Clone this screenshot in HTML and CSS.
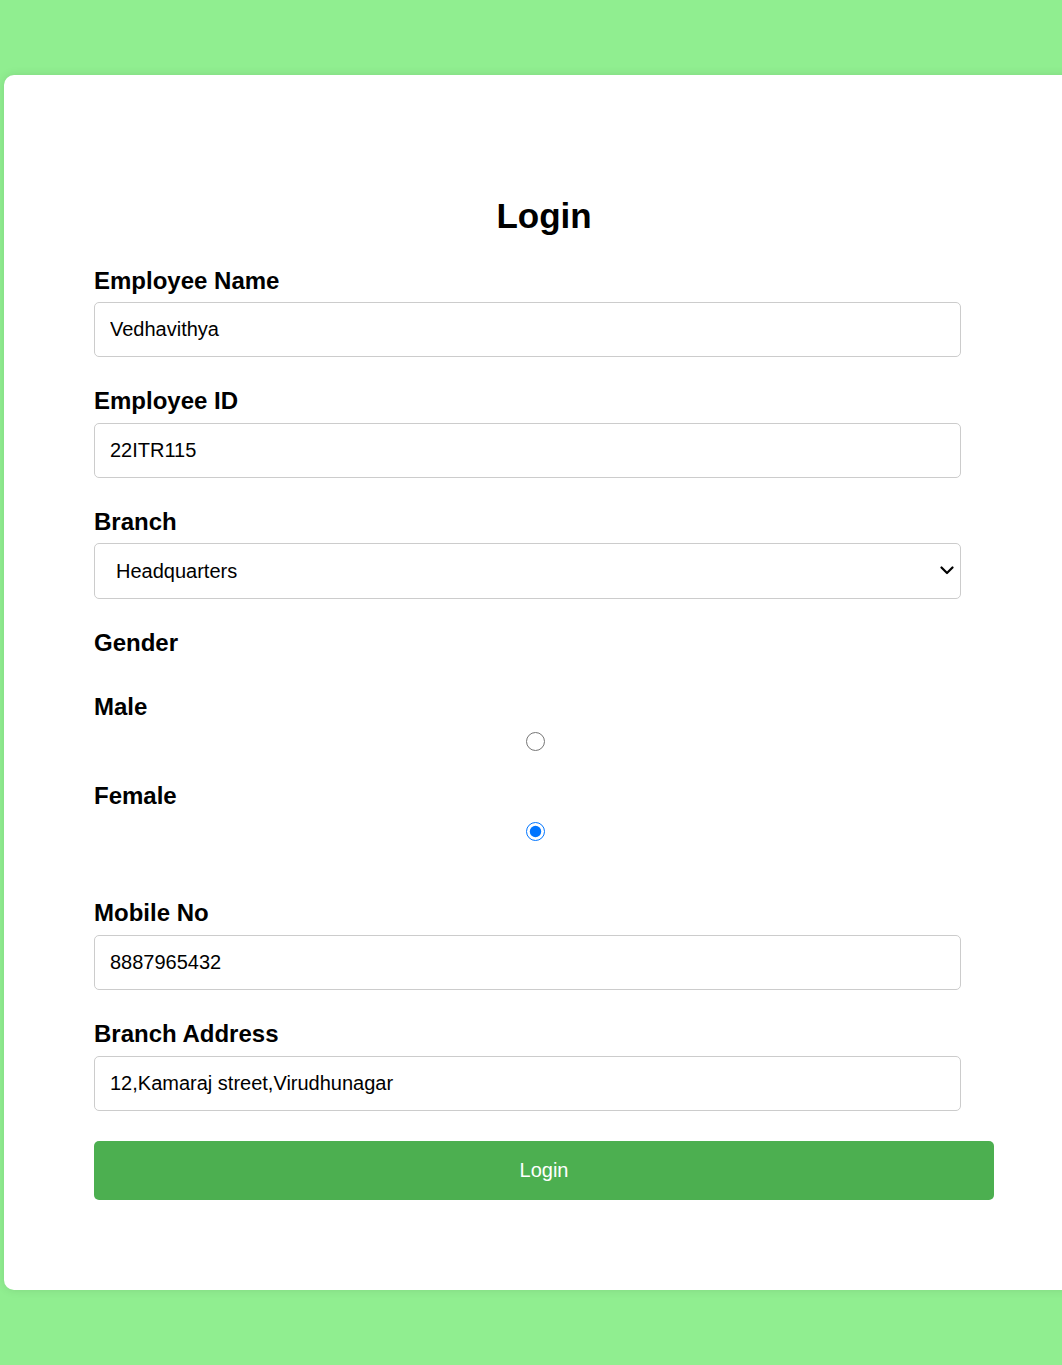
FILE: index.html
```html
<!DOCTYPE html>
<html lang="en">
<head>
<meta charset="utf-8">
<title>Login</title>
<link rel="stylesheet" href="styles.css">
</head>
<body>
<div class="card">
  <h2 class="title">Login</h2>
  <form class="form">
    <label class="label label-first" for="name">Employee Name</label>
    <input class="field" id="name" type="text" value="Vedhavithya">

    <label class="label" for="eid">Employee ID</label>
    <input class="field" id="eid" type="text" value="22ITR115">

    <label class="label label-tight" for="branch">Branch</label>
    <div class="select-wrap">
      <select class="field select" id="branch">
        <option>Headquarters</option>
      </select>
      <svg class="chevron" width="14" height="9" viewBox="0 0 14 9" aria-hidden="true">
        <path d="M1.5 1.5 L7 7 L12.5 1.5" fill="none" stroke="#000" stroke-width="2.2" stroke-linecap="round" stroke-linejoin="round"/>
      </svg>
    </div>

    <label class="label gender">Gender</label>
    <label class="label option" for="male">Male</label>
    <input class="radio" id="male" type="radio" name="gender">
    <label class="label option" for="female">Female</label>
    <input class="radio radio-last" id="female" type="radio" name="gender" checked>

    <label class="label" for="mobile">Mobile No</label>
    <input class="field" id="mobile" type="text" value="8887965432">

    <label class="label" for="addr">Branch Address</label>
    <input class="field" id="addr" type="text" value="12,Kamaraj street,Virudhunagar">

    <button class="btn" type="button">Login</button>
  </form>
</div>
</body>
</html>
```
FILE: styles.css
```css
html, body {
  margin: 0;
  padding: 0;
}
body {
  background: #90ee90;
  font-family: "Liberation Sans", Arial, sans-serif;
  overflow: hidden;
  min-height: 1365px;
  padding-top: 75px;
  box-sizing: border-box;
}
.card {
  margin-left: 4px;
  width: 1080px;
  box-sizing: border-box;
  background: #fff;
  border-radius: 10px;
  box-shadow: 0 0 10px rgba(0, 0, 0, 0.1);
  padding: 90px;
}
.title {
  margin: 31px 0 31.4px;
  font-size: 35px;
  line-height: 40px;
  font-weight: bold;
  text-align: center;
  color: #000;
}
.form {
  display: flex;
  flex-direction: column;
  align-items: flex-start;
}
.label {
  display: block;
  font-size: 24px;
  line-height: normal;
  font-weight: bold;
  color: #000;
  margin-bottom: 8px;
}
.label-first {
  margin-bottom: 7px;
}
.label-tight {
  margin-bottom: 7px;
}
.field {
  display: block;
  width: 867px;
  height: 55px;
  box-sizing: border-box;
  border: 1px solid #ccc;
  border-radius: 5px;
  padding: 0 15px;
  font-family: "Liberation Sans", Arial, sans-serif;
  font-size: 20px;
  color: #000;
  background: #fff;
  margin: 0 0 30px;
  outline: none;
}
.select-wrap {
  position: relative;
  width: 867px;
}
.select {
  -webkit-appearance: none;
  appearance: none;
  height: 56px;
  padding: 0 40px 0 21px;
  margin-bottom: 30px;
}
.chevron {
  position: absolute;
  left: 846px;
  top: 23px;
  pointer-events: none;
}
.gender {
  margin-bottom: 35.4px;
}
.option {
  margin-bottom: 11.4px;
}
.radio {
  display: block;
  width: 19px;
  height: 19px;
  margin: 0 0 31px 432px;
}
.radio-last {
  margin-bottom: 58.4px;
}
.btn {
  display: block;
  width: 900px;
  height: 59px;
  margin: 0;
  border: none;
  border-radius: 5px;
  background: #4caf50;
  color: #fff;
  font-family: "Liberation Sans", Arial, sans-serif;
  font-size: 20px;
  cursor: pointer;
}
```
